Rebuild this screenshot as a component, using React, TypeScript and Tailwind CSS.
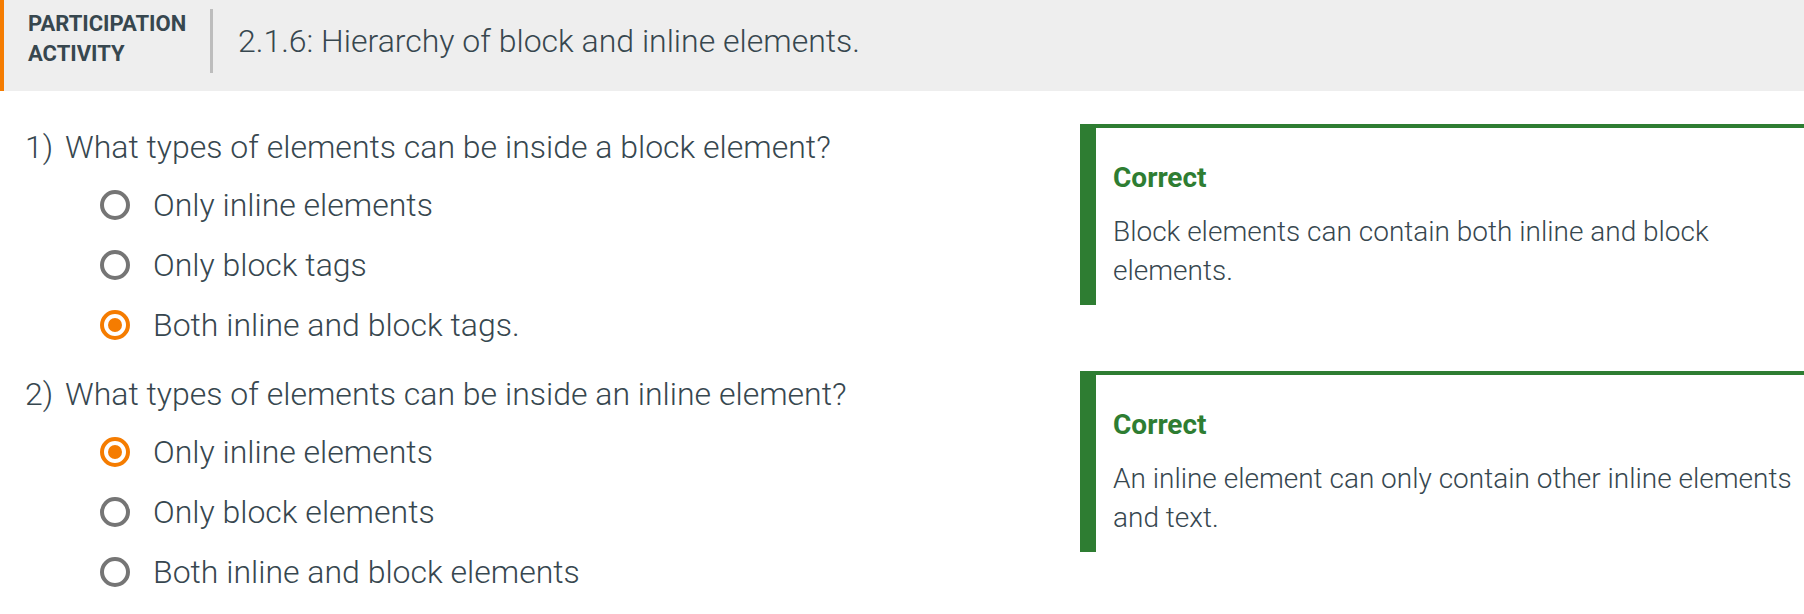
import React from "react";

type Opt = { label: string; selected?: boolean };

function Radio({ selected }: { selected?: boolean }) {
  if (selected) {
    return (
      <span className="flex items-center justify-center w-[30px] h-[30px] rounded-full border-4 border-[#f57c00] shrink-0">
        <span className="w-[14px] h-[14px] rounded-full bg-[#f57c00]" />
      </span>
    );
  }
  return <span className="block w-[30px] h-[30px] rounded-full border-4 border-[#757575] shrink-0" />;
}

function Question({
  num,
  text,
  options,
  feedback,
}: {
  num: string;
  text: string;
  options: Opt[];
  feedback: string;
}) {
  return (
    <div className="flex">
      <div className="w-[1080px] shrink-0">
        <div className="flex items-center h-[45px] pl-[25px] text-[32px] font-light">
          <span className="w-[40px]">{num}</span>
          <span>{text}</span>
        </div>
        <div className="mt-[6px]">
          {options.map((o) => (
            <div key={o.label} className="flex items-center h-[60px] pl-[100px]">
              <Radio selected={o.selected} />
              <span className="ml-[23px] text-[32px] font-light">{o.label}</span>
            </div>
          ))}
        </div>
      </div>
      <div className="flex-1 min-w-0">
        <div className="border-t-4 border-l-[16px] border-[#2e7d32] pl-[17px] pt-[30px] pb-[15px]">
          <div className="text-[28px] leading-[39px] font-bold text-[#2e7d32]">Correct</div>
          <div className="mt-[15px] text-[28px] leading-[39px] font-light">{feedback}</div>
        </div>
      </div>
    </div>
  );
}

export default function App() {
  return (
    <div className="w-[1804px] h-[614px] overflow-hidden bg-white text-[#37474f] font-['Roboto','Noto_Sans',sans-serif]">
      <div className="flex items-start h-[91px] bg-[#eeeeee] border-l-4 border-[#f57c00] pl-[24px] pt-[9px]">
        <div className="w-[182px] text-[22px] leading-[30px] font-bold">
          PARTICIPATION
          <br />
          ACTIVITY
        </div>
        <div className="w-[3px] h-[64px] bg-[#bdbdbd]" />
        <div className="ml-[25px] h-[64px] flex items-center text-[32px] font-light">
          2.1.6: Hierarchy of block and inline elements.
        </div>
      </div>
      <div className="pt-[33px] flex flex-col gap-[16px]">
        <Question
          num="1)"
          text="What types of elements can be inside a block element?"
          options={[
            { label: "Only inline elements" },
            { label: "Only block tags" },
            { label: "Both inline and block tags.", selected: true },
          ]}
          feedback="Block elements can contain both inline and block elements."
        />
        <Question
          num="2)"
          text="What types of elements can be inside an inline element?"
          options={[
            { label: "Only inline elements", selected: true },
            { label: "Only block elements" },
            { label: "Both inline and block elements" },
          ]}
          feedback="An inline element can only contain other inline elements and text."
        />
      </div>
    </div>
  );
}
